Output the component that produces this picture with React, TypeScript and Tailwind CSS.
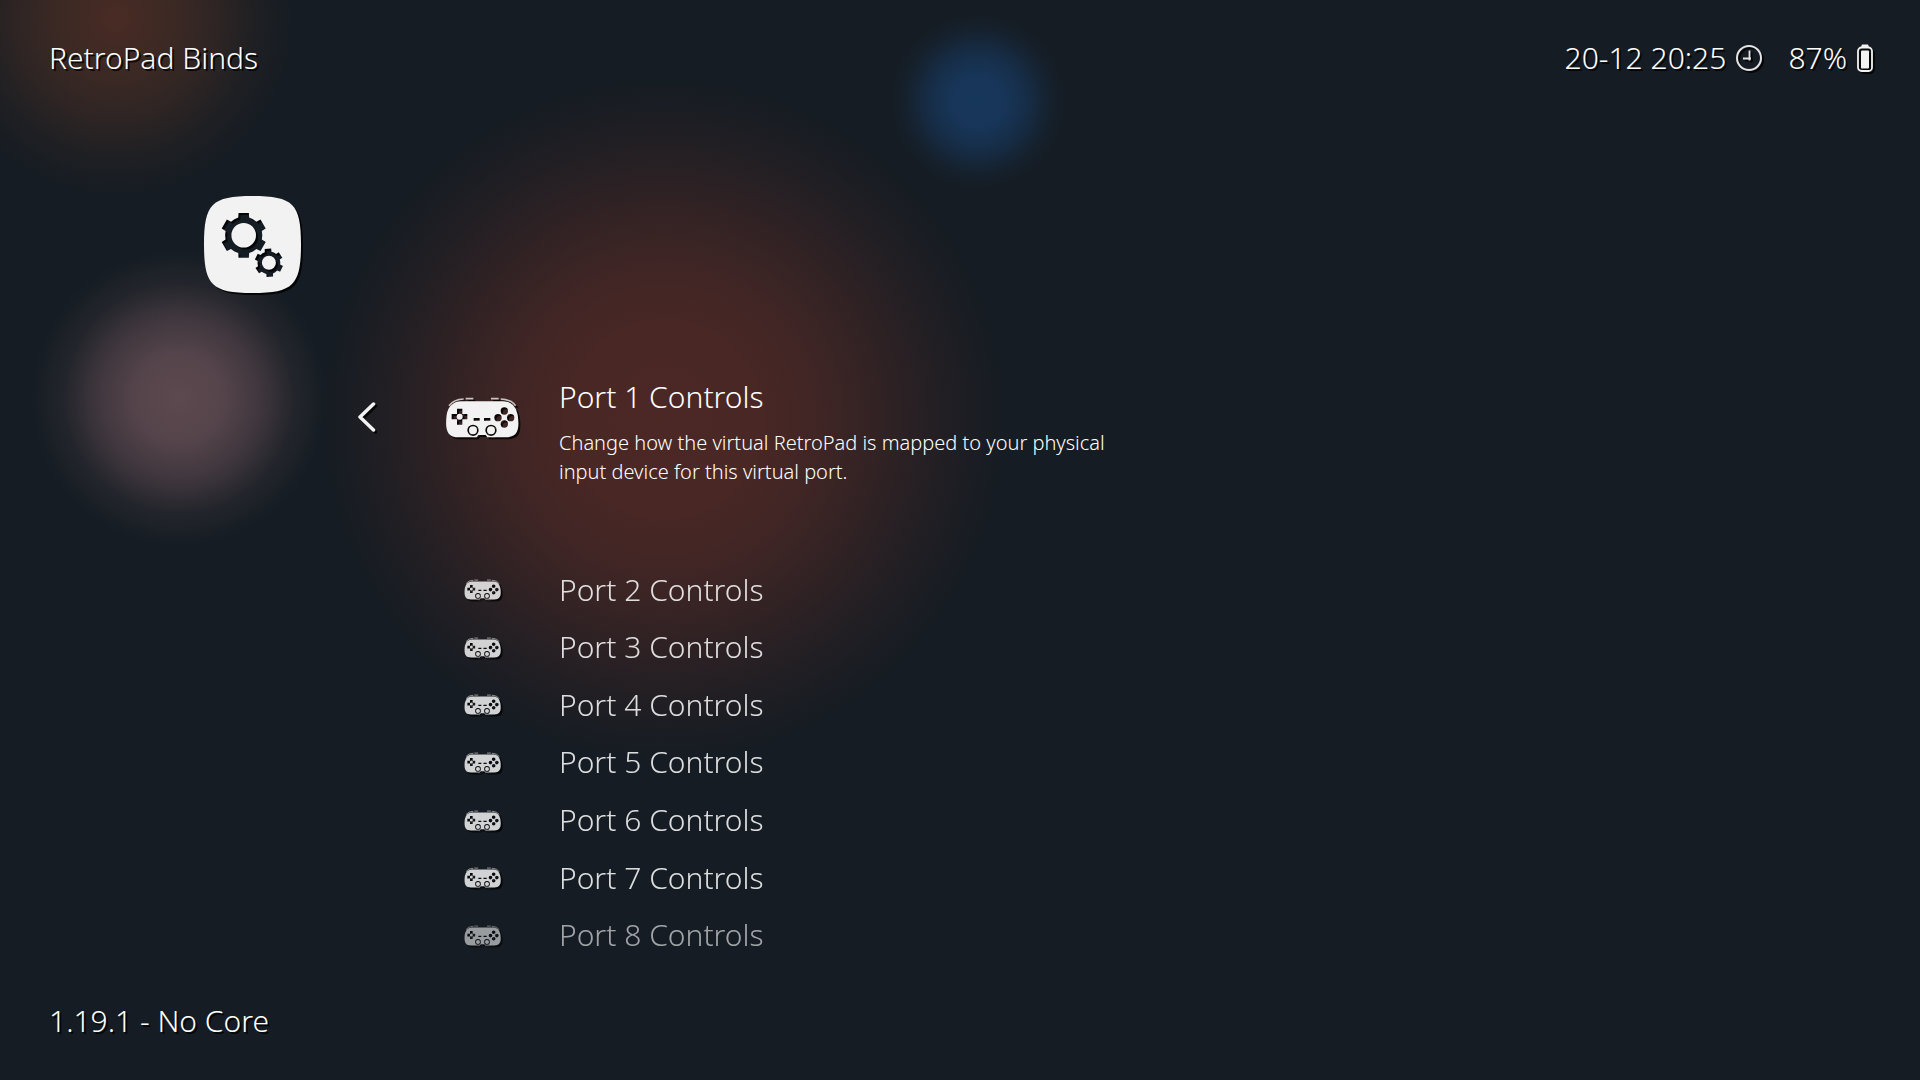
const ports = [2, 3, 4, 5, 6, 7, 8];

function circle(cx: number, cy: number, r: number) {
  return `M${cx - r} ${cy}a${r} ${r} 0 1 0 ${2 * r} 0a${r} ${r} 0 1 0 ${-2 * r} 0Z`;
}

/** Outline of a six-toothed gear with its round hub. */
function gear(cx: number, cy: number, body: number, tip: number, hub: number, tilt: number) {
  const points: string[] = [];
  for (let tooth = 0; tooth < 6; tooth++) {
    const middle = -90 + tilt + tooth * 60;
    const corners = [
      [-30, body],
      [-17, body],
      [-13, tip],
      [13, tip],
      [17, body],
    ];
    for (const [offset, radius] of corners) {
      const a = ((middle + offset) * Math.PI) / 180;
      points.push(`${(cx + radius * Math.cos(a)).toFixed(2)} ${(cy + radius * Math.sin(a)).toFixed(2)}`);
    }
  }
  return `M${points.join("L")}Z${circle(cx, cy, hub)}`;
}

function SettingsIcon() {
  const tile =
    "M48.5 0C69 0 81 2 88 9C95 16 97 28 97 48.5C97 69 95 81 88 88C81 95 69 97 48.5 97C28 97 16 95 9 88C2 81 0 69 0 48.5C0 28 2 16 9 9C16 2 28 0 48.5 0Z";
  return (
    <svg
      viewBox="0 0 97 97"
      className="h-[97px] w-[97px] overflow-visible fill-[#f2f2f2] drop-shadow-[2px_2px_0_rgba(0,0,0,0.8)]"
      role="img"
      aria-label="Settings"
    >
      <path
        fillRule="evenodd"
        d={tile + gear(39.7, 39.3, 18.6, 23, 12.3, 0) + gear(64.9, 66.8, 11.4, 14.4, 7, -4)}
      />
    </svg>
  );
}

function Gamepad({ className }: { className: string }) {
  const body =
    "M94 64H222Q258 66 264 104C270 146 266 172 228 172H173L168 165H146L141 172H88C50 172 46 146 51 104Q58 66 94 64Z";
  const dpad = "M82 86H98V102H113V118H98V134H82V118H66V102H82Z";
  const dashes = "M132 114H150V122H132ZM163 114H182V122H163Z";
  return (
    <svg
      viewBox="46 51 222 123"
      className={`shrink-0 overflow-visible drop-shadow-[2px_2px_0_rgba(0,0,0,0.8)] ${className}`}
      aria-hidden="true"
    >
      <path
        fill="#f2f2f2"
        fillRule="evenodd"
        d={
          body +
          dpad +
          circle(90, 110, 9) +
          dashes +
          circle(224, 93, 11) +
          circle(205, 113, 11) +
          circle(243, 113, 11) +
          circle(224, 132, 11) +
          circle(130, 151, 17) +
          circle(130, 151, 12) +
          circle(184, 151, 17) +
          circle(184, 151, 12)
        }
      />
      <path
        fill="none"
        stroke="#c9c3c3"
        strokeWidth="5"
        d="M58 77Q72 58 102 57M108 56H131M184 56H207M213 57Q243 58 258 77"
      />
    </svg>
  );
}

function ClockIcon() {
  return (
    <svg
      viewBox="0 0 26 26"
      className="h-[26px] w-[26px] overflow-visible fill-none stroke-[#e4e4e4] drop-shadow-[2px_2px_0_rgba(0,0,0,0.8)]"
      aria-hidden="true"
    >
      <circle cx="13" cy="13" r="12" strokeWidth="2" />
      <path d="M13.500 5.500V15.500M7 13.500H15" strokeWidth="1.800" />
    </svg>
  );
}

function BatteryIcon() {
  return (
    <svg
      viewBox="0 0 16 28"
      className="h-7 w-4 overflow-visible fill-[#f2f2f2] drop-shadow-[2px_2px_0_rgba(0,0,0,0.8)]"
      aria-hidden="true"
    >
      <path d="M5 0.500H11L12 3H4Z" />
      <rect x="1" y="3.500" width="14" height="23.500" rx="3.500" fill="none" stroke="#f2f2f2" strokeWidth="1.800" />
      <rect x="4" y="6.500" width="8" height="18" rx="1" />
    </svg>
  );
}

const glows =
  "bg-[radial-gradient(circle_88px_at_978px_101px,rgba(23,56,94,0.95),rgba(23,56,94,0.9)_30%,rgba(23,56,94,0.6)_56%,rgba(23,56,94,0.2)_80%,rgba(23,56,94,0)),radial-gradient(circle_180px_at_116px_18px,rgba(74,43,36,0.98),rgba(66,43,36,0.88)_30%,rgba(64,43,36,0.6)_55%,rgba(60,42,36,0.24)_78%,rgba(60,42,36,0)),radial-gradient(circle_148px_at_179px_398px,rgba(92,72,79,1),rgba(92,72,79,0.92)_28%,rgba(92,72,79,0.6)_55%,rgba(92,72,79,0.2)_78%,rgba(92,72,79,0)),radial-gradient(circle_346px_at_664px_420px,rgba(76,40,37,1),rgba(76,40,37,0.93)_28%,rgba(76,40,37,0.76)_46%,rgba(76,40,37,0.52)_62%,rgba(76,40,37,0.28)_77%,rgba(76,40,37,0.1)_90%,rgba(76,40,37,0))]";

export default function App() {
  return (
    <div
      className={`flex min-h-screen flex-col overflow-hidden bg-[#151c23] font-['Noto_Sans',sans-serif] text-[30px] leading-10 font-light text-white [text-shadow:2px_2px_0_rgba(0,0,0,0.8)] ${glows}`}
    >
      <header className="flex items-center justify-between pt-[38px] pr-[47px] pl-[49px]">
        <h1>RetroPad Binds</h1>
        <div className="flex items-center">
          <time>20-12 20:25</time>
          <span className="ml-2.5">
            <ClockIcon />
          </span>
          <span className="ml-[26px]">87%</span>
          <span className="ml-2.5">
            <BatteryIcon />
          </span>
        </div>
      </header>

      <main>
        <div className="mt-[118px] ml-[204px]">
          <SettingsIcon />
        </div>

        <section className="mt-[84px] ml-[357px] flex items-start">
          <button type="button" aria-label="Back" className="flex h-20 w-[19px] items-center">
            <svg
              viewBox="0 0 19 30"
              className="h-[30px] w-[19px] overflow-visible fill-none stroke-[#f2f2f2] drop-shadow-[2px_2px_0_rgba(0,0,0,0.8)]"
              aria-hidden="true"
            >
              <path d="M16.500 2L3 15L16.500 28" strokeWidth="3.500" strokeLinecap="round" strokeLinejoin="round" />
            </svg>
          </button>
          <button type="button" className="ml-[69px] flex items-start text-left">
            <span className="flex h-20 items-center">
              <Gamepad className="h-[41px] w-[74px]" />
            </span>
            <span className="ml-10 block">
              <span className="block">Port 1 Controls</span>
              <span className="mt-[11px] block max-w-[580px] text-xl leading-[29px] text-white">
                Change how the virtual RetroPad is mapped to your physical input device for this virtual port.
              </span>
            </span>
          </button>
        </section>

        <ul className="mt-[75px] ml-[445px] grid h-[403px] auto-rows-fr">
          {ports.map((port) => (
            <li key={port} className={`flex ${port === 8 ? "opacity-60" : "opacity-85"}`}>
              <button type="button" className="flex items-center text-left">
                <span className="flex w-[74px] justify-center">
                  <Gamepad className="h-[21px] w-[37px]" />
                </span>
                <span className="ml-10">Port {port} Controls</span>
              </button>
            </li>
          ))}
        </ul>
      </main>

      <footer className="mt-auto pb-[39px] pl-[49px]">1.19.1 - No Core</footer>
    </div>
  );
}
